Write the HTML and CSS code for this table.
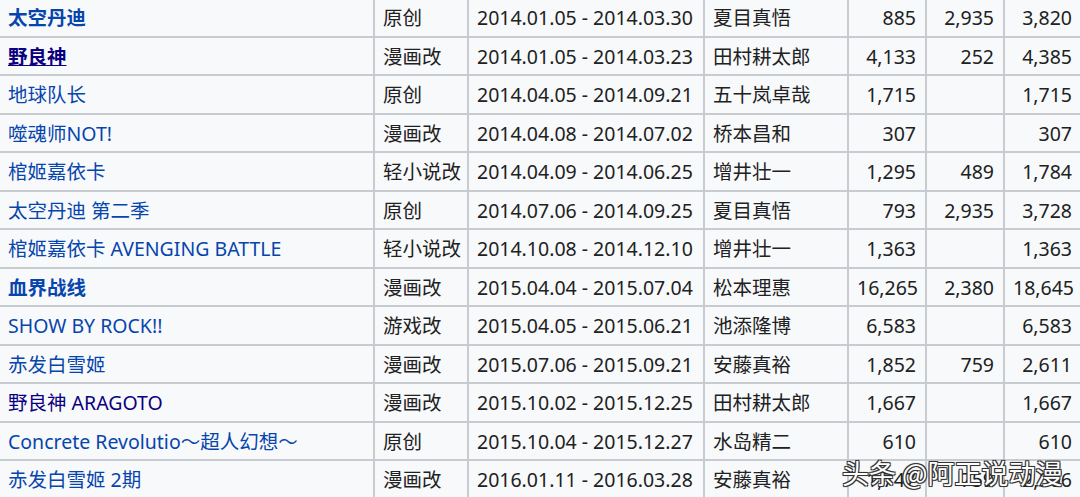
FILE: index.html
```html
<!DOCTYPE html>
<html lang="zh">
<head>
<meta charset="utf-8">
<title>作品列表</title>
<link rel="stylesheet" href="styles.css">
</head>
<body>
<div class="viewport">
<table class="works">
<colgroup>
<col class="c-title"><col class="c-type"><col class="c-date"><col class="c-dir"><col class="c-n"><col class="c-n"><col class="c-n">
</colgroup>
<tbody>
<tr><td class="title"><a class="b">太空丹迪</a></td><td>原创</td><td>2014.01.05 - 2014.03.30</td><td>夏目真悟</td><td class="num">885</td><td class="num">2,935</td><td class="num">3,820</td></tr>
<tr><td class="title"><a class="b v u">野良神</a></td><td>漫画改</td><td>2014.01.05 - 2014.03.23</td><td>田村耕太郎</td><td class="num">4,133</td><td class="num">252</td><td class="num">4,385</td></tr>
<tr><td class="title"><a>地球队长</a></td><td>原创</td><td>2014.04.05 - 2014.09.21</td><td>五十岚卓哉</td><td class="num">1,715</td><td class="num"></td><td class="num">1,715</td></tr>
<tr><td class="title"><a>噬魂师NOT!</a></td><td>漫画改</td><td>2014.04.08 - 2014.07.02</td><td>桥本昌和</td><td class="num">307</td><td class="num"></td><td class="num">307</td></tr>
<tr><td class="title"><a>棺姬嘉依卡</a></td><td>轻小说改</td><td>2014.04.09 - 2014.06.25</td><td>增井壮一</td><td class="num">1,295</td><td class="num">489</td><td class="num">1,784</td></tr>
<tr><td class="title"><a>太空丹迪 第二季</a></td><td>原创</td><td>2014.07.06 - 2014.09.25</td><td>夏目真悟</td><td class="num">793</td><td class="num">2,935</td><td class="num">3,728</td></tr>
<tr><td class="title"><a>棺姬嘉依卡 AVENGING BATTLE</a></td><td>轻小说改</td><td>2014.10.08 - 2014.12.10</td><td>增井壮一</td><td class="num">1,363</td><td class="num"></td><td class="num">1,363</td></tr>
<tr><td class="title"><a class="b">血界战线</a></td><td>漫画改</td><td>2015.04.04 - 2015.07.04</td><td>松本理惠</td><td class="num">16,265</td><td class="num">2,380</td><td class="num">18,645</td></tr>
<tr><td class="title"><a>SHOW BY ROCK!!</a></td><td>游戏改</td><td>2015.04.05 - 2015.06.21</td><td>池添隆博</td><td class="num">6,583</td><td class="num"></td><td class="num">6,583</td></tr>
<tr><td class="title"><a>赤发白雪姬</a></td><td>漫画改</td><td>2015.07.06 - 2015.09.21</td><td>安藤真裕</td><td class="num">1,852</td><td class="num">759</td><td class="num">2,611</td></tr>
<tr><td class="title"><a class="v">野良神 ARAGOTO</a></td><td>漫画改</td><td>2015.10.02 - 2015.12.25</td><td>田村耕太郎</td><td class="num">1,667</td><td class="num"></td><td class="num">1,667</td></tr>
<tr><td class="title"><a>Concrete Revolutio～超人幻想～</a></td><td>原创</td><td>2015.10.04 - 2015.12.27</td><td>水岛精二</td><td class="num">610</td><td class="num"></td><td class="num">610</td></tr>
<tr><td class="title"><a>赤发白雪姬 2期</a></td><td>漫画改</td><td>2016.01.11 - 2016.03.28</td><td>安藤真裕</td><td class="num">1,747</td><td class="num">759</td><td class="num">2,506</td></tr>
</tbody>
</table>
<div class="watermark">头条 @阿正说动漫</div>
</div>
</body>
</html>
```
FILE: styles.css
```css
html, body {
  margin: 0;
  padding: 0;
  background: #f8f9fa;
}
.viewport {
  position: relative;
  width: 1080px;
  height: 497px;
  overflow: hidden;
  background: #f8f9fa;
}
.works {
  border-collapse: collapse;
  table-layout: fixed;
  width: 1084px;
  margin-left: -2px;
  margin-top: -3px;
  font-family: "Noto Sans", "Noto Sans CJK SC", sans-serif;
  font-size: 19.5px;
  color: #202122;
  background: #f8f9fa;
}
.c-title { width: 375px; }
.c-type { width: 94px; }
.c-date { width: 236px; }
.c-dir { width: 144px; }
.c-n { width: 78px; }
.works td {
  border: 2px solid #c8ccd1;
  height: 34.5px;
  padding: 2px 7px 0 8px;
  white-space: nowrap;
  line-height: 24px;
  vertical-align: middle;
}
.works td.num {
  text-align: right;
  padding-right: 9px;
}
.works a {
  color: #0645ad;
  text-decoration: none;
}
.works a.b { font-weight: 700; }
.works a.v { color: #0b0080; }
.works a.u { text-decoration: underline; }
.watermark {
  position: absolute;
  left: 842px;
  top: 453px;
  font-family: "Noto Sans CJK SC", sans-serif;
  font-size: 27px;
  color: #ffffff;
  text-shadow: -1px -1px 0 #333, 1px -1px 0 #333, -1px 1px 0 #333, 1px 1px 0 #333, 0 0 2px #000;
  white-space: nowrap;
}
```
